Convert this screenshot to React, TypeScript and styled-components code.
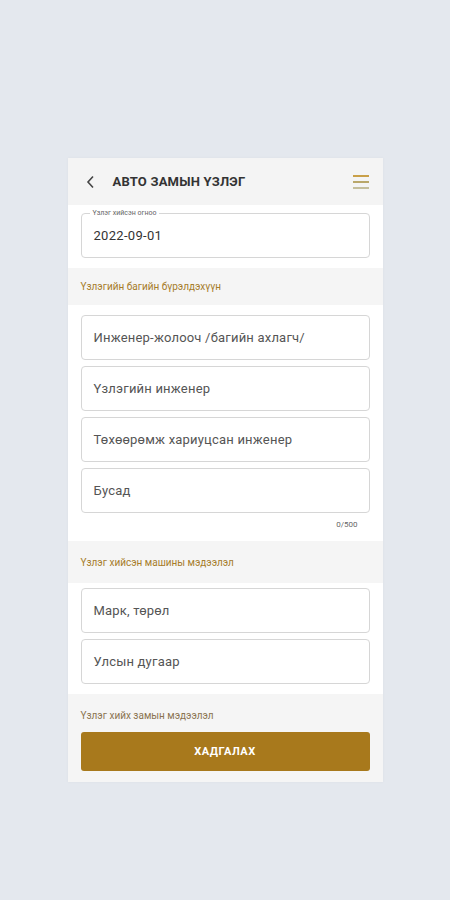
import styled, { createGlobalStyle } from "styled-components";

const GlobalStyle = createGlobalStyle`
  html, body {
    margin: 0;
    padding: 0;
    background: #e4e8ee;
    font-family: Roboto, "Noto Sans", "Liberation Sans", sans-serif;
  }
  * { box-sizing: border-box; }
`;

const teamFields = [
  "Инженер-жолооч /багийн ахлагч/",
  "Үзлэгийн инженер",
  "Төхөөрөмж хариуцсан инженер",
  "Бусад",
];

const carFields = ["Марк, төрөл", "Улсын дугаар"];

const App = () => {
  return (
    <>
      <GlobalStyle />
      <St.Page>
        <St.Card>
          <St.Header>
            <St.Back>
              <svg width="10" height="14" viewBox="0 0 10 14">
                <path d="M7 1.5 L2 7 L7 12.5" fill="none" stroke="#444" strokeWidth="1.6" />
              </svg>
            </St.Back>
            <St.Title>АВТО ЗАМЫН ҮЗЛЭГ</St.Title>
            <St.Menu>
              <span />
              <span />
              <span />
            </St.Menu>
          </St.Header>

          <St.White $top={8} $bottom={10}>
            <St.Field>
              <St.FloatLabel>Үзлэг хийсэн огноо</St.FloatLabel>
              <St.Value>2022-09-01</St.Value>
            </St.Field>
          </St.White>

          <St.SectionTitle $height={37}>Үзлэгийн багийн бүрэлдэхүүн</St.SectionTitle>

          <St.White $top={10} $bottom={12}>
            <St.Stack>
              {teamFields.map((f) => (
                <St.Field key={f}>
                  <St.Placeholder>{f}</St.Placeholder>
                </St.Field>
              ))}
            </St.Stack>
            <St.Counter>0/500</St.Counter>
          </St.White>

          <St.SectionTitle $height={42}>Үзлэг хийсэн машины мэдээлэл</St.SectionTitle>

          <St.White $top={5} $bottom={10}>
            <St.Stack>
              {carFields.map((f) => (
                <St.Field key={f}>
                  <St.Placeholder>{f}</St.Placeholder>
                </St.Field>
              ))}
            </St.Stack>
          </St.White>

          <St.Footer>
            <St.FooterLabel>Үзлэг хийх замын мэдээлэл</St.FooterLabel>
            <St.Save>ХАДГАЛАХ</St.Save>
          </St.Footer>
        </St.Card>
      </St.Page>
    </>
  );
};

export default App;

const St = {
  Page: styled.main`
    width: 450px;
    height: 900px;
    padding-top: 158px;
  `,
  Card: styled.section`
    width: 315px;
    margin: 0 auto;
    background: #f5f5f5;
    box-shadow: 0 0 3px rgba(0, 0, 0, 0.04);
  `,
  Header: styled.header`
    display: flex;
    align-items: center;
    height: 47px;
    padding: 0 14px 0 18px;
    background: #f4f4f4;
  `,
  Back: styled.div`
    display: flex;
    align-items: center;
    width: 27px;
  `,
  Title: styled.h1`
    flex: 1;
    margin: 0;
    font-size: 13px;
    font-weight: 700;
    color: #333;
    letter-spacing: 0.2px;
  `,
  Menu: styled.div`
    display: flex;
    flex-direction: column;
    gap: 4px;
    width: 16px;

    & > span {
      display: block;
      height: 2px;
      background: #c9a048;
    }
    & > span:nth-child(2) {
      background: #b9a76a;
    }
    & > span:nth-child(3) {
      background: #c4be9c;
    }
  `,
  White: styled.div<{ $top: number; $bottom: number }>`
    background: #fff;
    padding: ${({ $top }) => $top}px 13px ${({ $bottom }) => $bottom}px;
  `,
  Stack: styled.div`
    display: flex;
    flex-direction: column;
    gap: 6px;
  `,
  Field: styled.div`
    position: relative;
    display: flex;
    align-items: center;
    height: 45px;
    padding: 0 12px;
    border: 1px solid #d6d6d6;
    border-radius: 4px;
    background: #fff;
  `,
  FloatLabel: styled.span`
    position: absolute;
    top: -5px;
    left: 8px;
    padding: 0 3px;
    background: #fff;
    font-size: 7px;
    line-height: 9px;
    color: #666;
  `,
  Value: styled.span`
    font-size: 13px;
    color: #333;
    letter-spacing: 0.3px;
  `,
  Placeholder: styled.span`
    font-size: 13px;
    color: #555;
    letter-spacing: 0.2px;
  `,
  Counter: styled.div`
    text-align: right;
    padding: 7px 12px 0 0;
    font-size: 8px;
    color: #666;
  `,
  SectionTitle: styled.div<{ $height: number }>`
    display: flex;
    align-items: center;
    height: ${({ $height }) => $height}px;
    padding: 0 13px;
    font-size: 10px;
    color: #a67c2a;
  `,
  Footer: styled.div`
    padding: 16px 13px 11px;
  `,
  FooterLabel: styled.div`
    font-size: 10px;
    color: #8a7350;
    margin-bottom: 11px;
  `,
  Save: styled.button`
    display: block;
    width: 100%;
    height: 39px;
    border: none;
    border-radius: 3px;
    background: #a8791c;
    color: #fff;
    font-family: inherit;
    font-size: 11px;
    font-weight: 700;
    letter-spacing: 0.5px;
  `,
};
